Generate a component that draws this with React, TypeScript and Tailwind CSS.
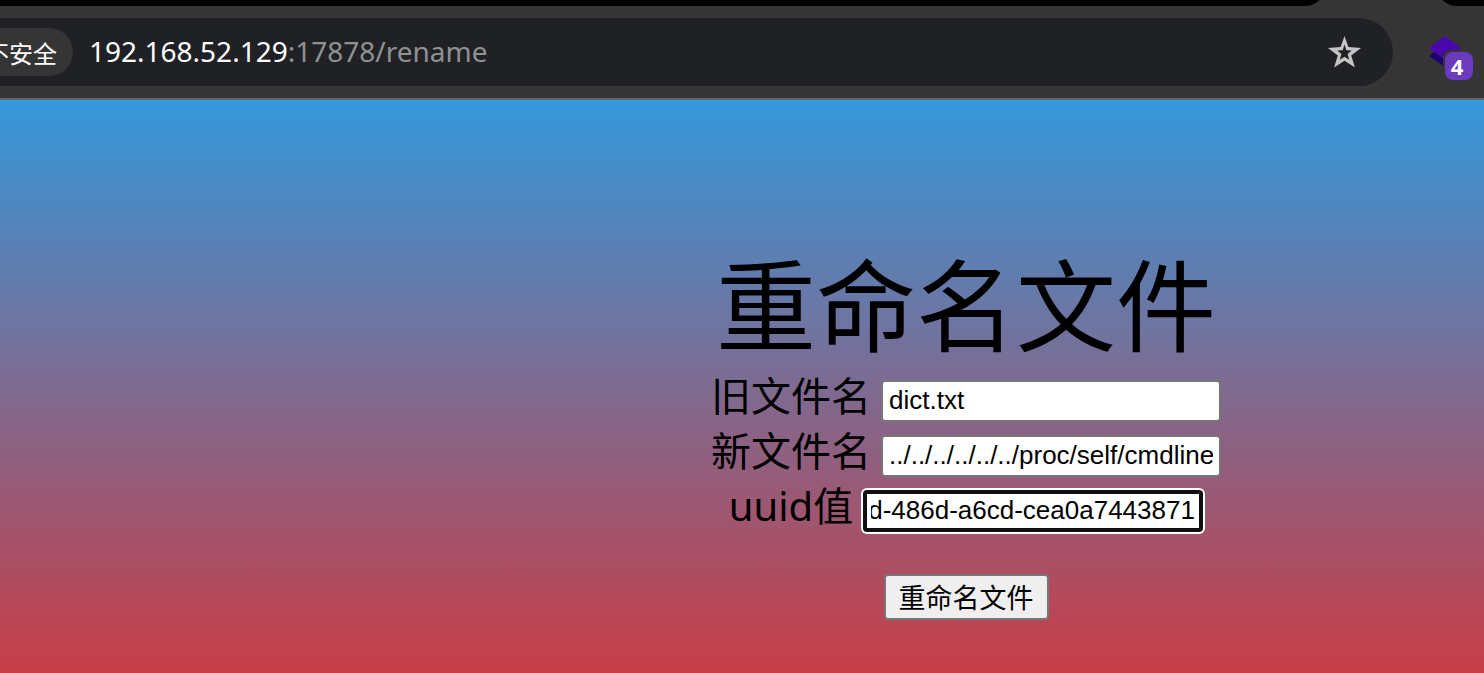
import { useEffect, useRef } from "react";

function TabStrip() {
  return (
    <div className="flex h-[6px] items-end justify-between gap-[112px] overflow-hidden">
      <div className="h-5 flex-1 shrink-0 rounded-br-[20px] bg-black" />
      <div className="h-5 w-[47px] shrink-0 rounded-bl-[20px] bg-black" />
    </div>
  );
}

function Toolbar() {
  return (
    <header className="overflow-hidden border-b-2 border-[#636363] bg-[#353535]">
      <TabStrip />
      <div className="flex items-center py-3 pr-[11px]">
        <div className="flex h-[68px] min-w-0 flex-1 items-center rounded-r-full bg-[#202124] pr-8">
          <button
            type="button"
            className="flex h-12 w-[73px] shrink-0 items-center justify-end rounded-r-full bg-[#353535] pr-4 pt-0.5 font-['Noto_Sans_CJK_SC',sans-serif] text-[24px] leading-8 whitespace-nowrap text-white"
          >
            不安全
          </button>
          <div className="ml-4 min-w-0 flex-1 truncate pb-0.5 font-['Noto_Sans',sans-serif] text-[28px] leading-10 text-[#8f9193]">
            <span className="text-white">192.168.52.129</span>:17878/rename
          </div>
          <button type="button" aria-label="Bookmark" className="shrink-0">
            <svg width="33" height="32" viewBox="0 0 33 32" fill="none">
              <path
                fillRule="evenodd"
                clipRule="evenodd"
                fill="#c4c4c4"
                d="M16.5 0L20.4 11.1L33 12L23.2 19.6L26.9 31.5L16.5 24.7L6.1 31.5L9.8 19.6L0 12L12.6 11.1ZM16.5 8.4L14.7 14.2L9.3 14.6L13.4 18.1L11.8 23.8L16.5 20.7L21.2 23.8L19.6 18.1L23.7 14.6L18.3 14.2Z"
              />
            </svg>
          </button>
        </div>
        <button type="button" aria-label="Extension" className="relative mt-3 ml-9 h-11 w-11 shrink-0">
          <svg width="44" height="44" viewBox="0 0 44 44">
            <path d="M0 20L6 15L28 15L16 31Z" fill="#20006e" />
            <path d="M16 0L32 12L16 24L0 12Z" fill="#4a07ae" />
            <path d="M14 44V22Q14 14 22 14H44V44Z" fill="#353535" />
          </svg>
          <span className="absolute right-0 bottom-0 flex h-7 w-7 items-center justify-center rounded-lg bg-[#6b3abd] pr-1 font-['Open_Sans',sans-serif] text-[22px] leading-7 font-bold text-white">
            4
          </span>
        </button>
      </div>
    </header>
  );
}

const rowClass = "flex h-[55px] items-center gap-[10px]";
const labelClass =
  "self-start font-['Noto_Sans','Noto_Sans_CJK_SC',sans-serif] text-[40px] leading-[45px] font-normal whitespace-nowrap";
const inputClass =
  "h-[42px] w-[340px] rounded-[4px] border-2 border-[#767676] bg-white px-[6px] font-['Liberation_Sans',sans-serif] text-[26px] leading-8 text-black outline-none";

export default function App() {
  const uuidRef = useRef<HTMLInputElement>(null);

  useEffect(() => {
    const field = uuidRef.current;
    if (field) field.scrollLeft = field.scrollWidth;
  }, []);

  return (
    <div className="flex min-h-screen flex-col text-black">
      <Toolbar />
      <main className="flex flex-1 flex-col items-center bg-linear-to-b/srgb from-[#3498db] to-[#c83d47] pt-[144px] pb-[48px] pl-[448px]">
        <h1 className="mb-[15px] font-['Noto_Sans_CJK_SC',sans-serif] text-[100px] leading-[114px] font-normal whitespace-nowrap">
          重命名文件
        </h1>
        <form className="flex flex-col items-center" onSubmit={(e) => e.preventDefault()}>
          <div className={rowClass}>
            <label htmlFor="old-name" className={labelClass}>
              旧文件名
            </label>
            <input id="old-name" type="text" defaultValue="dict.txt" className={inputClass} />
          </div>
          <div className={rowClass}>
            <label htmlFor="new-name" className={labelClass}>
              新文件名
            </label>
            <input
              id="new-name"
              type="text"
              defaultValue="../../../../../../proc/self/cmdline"
              className={inputClass}
            />
          </div>
          <div className={rowClass}>
            <label htmlFor="uuid" className={labelClass}>
              uuid值
            </label>
            <input
              id="uuid"
              ref={uuidRef}
              type="text"
              defaultValue="d-486d-a6cd-cea0a7443871"
              className="h-[42px] w-[340px] rounded-[4px] border-4 border-[#101010] bg-white px-1 font-['Liberation_Sans',sans-serif] text-[26px] leading-8 text-black ring-2 ring-white outline-none"
            />
          </div>
          <button
            type="submit"
            className="mt-9 flex h-[46px] items-center rounded-[4px] border-2 border-[#767676] bg-[#efefef] px-[13px] font-['Noto_Sans_CJK_SC',sans-serif] text-[27px] leading-9"
          >
            重命名文件
          </button>
        </form>
      </main>
    </div>
  );
}
